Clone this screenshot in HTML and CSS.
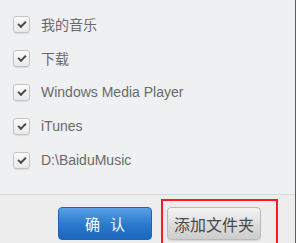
FILE: index.html
```html
<!DOCTYPE html>
<html lang="zh-CN">
<head>
    <meta charset="UTF-8">
    <title>添加文件夹</title>
    <link rel="stylesheet" href="styles.css">
</head>
<body>
    <div class="dialog">
        <ul class="list">
            <li><span class="check"></span>我的音乐</li>
            <li><span class="check"></span>下载</li>
            <li><span class="check"></span>Windows Media Player</li>
            <li><span class="check"></span>iTunes</li>
            <li><span class="check"></span>D:\BaiduMusic</li>
        </ul>
        <div class="footer">
            <a class="btn btn-ok">确 认</a>
            <a class="btn btn-add">添加文件夹</a>
            <div class="mark"></div>
        </div>
    </div>
</body>
</html>
```
FILE: styles.css
```css
* {
    margin: 0;
    padding: 0;
    list-style: none;
    box-sizing: border-box;
}

body {
    font-family: "Liberation Sans", "Noto Sans CJK SC", sans-serif;
    background: #eff0f2;
    overflow: hidden;
}

.dialog {
    width: 296px;
    height: 243px;
    overflow: hidden;
    border-right: 1px solid #5c5c5c;
    background: #eff0f2;
}

.list {
    padding: 7px 0 17px 13px;
    border-bottom: 1px solid #d7d8da;
}

.list li {
    height: 34px;
    display: flex;
    align-items: center;
    font-size: 14px;
    color: #6a6a6a;
}

.check {
    width: 17px;
    height: 17px;
    margin-right: 11px;
    border: 1px solid #c4c4c4;
    border-radius: 3px;
    background: linear-gradient(#fbfbfb, #e9e9e9);
    box-shadow: 0 1px 1px rgba(0, 0, 0, .08);
    position: relative;
}

.check::after {
    content: "";
    position: absolute;
    left: 4px;
    top: 4px;
    width: 6px;
    height: 3px;
    border-left: 2px solid #4a4a4a;
    border-bottom: 2px solid #4a4a4a;
    transform: rotate(-45deg);
}

.footer {
    position: relative;
    display: flex;
    gap: 15px;
    padding: 12px 0 0 58px;
    background: #ededee;
    height: 60px;
}

.btn {
    width: 94px;
    height: 33px;
    border-radius: 4px;
    display: flex;
    align-items: center;
    justify-content: center;
}

.btn-ok {
    color: #fff;
    font-size: 15px;
    letter-spacing: 3px;
    padding-left: 3px;
    border: 1px solid #1c64b6;
    background: linear-gradient(#58a1e6, #2a78cc 55%, #1c66bd);
}

.btn-add {
    color: #4a4a4a;
    font-size: 16px;
    border: 1px solid #b9b9b9;
    background: linear-gradient(#f4f4f4, #dadada 60%, #cdcdcd);
    box-shadow: 0 1px 1px rgba(0, 0, 0, .1);
}

.mark {
    position: absolute;
    left: 161px;
    top: 4px;
    width: 117px;
    height: 56px;
    border: 2px solid #ff1a1a;
}
```
